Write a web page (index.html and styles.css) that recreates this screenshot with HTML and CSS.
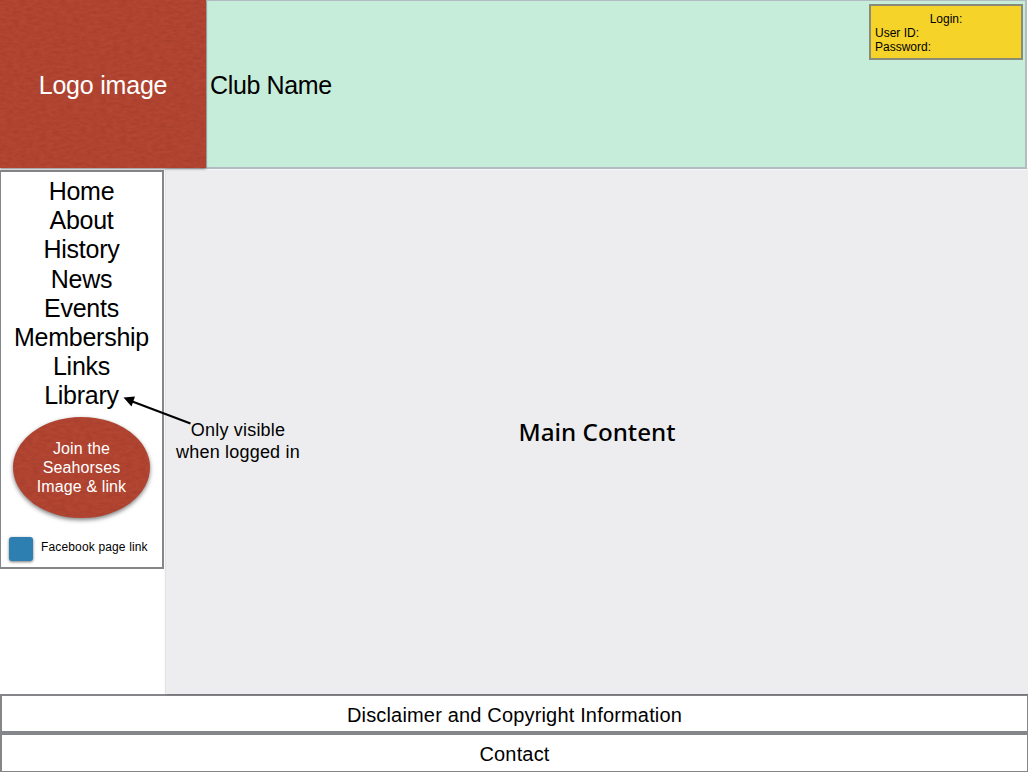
FILE: index.html
```html
<!DOCTYPE html>
<html lang="en">
<head>
<meta charset="utf-8">
<title>Club Name</title>
<link rel="stylesheet" href="styles.css">
</head>
<body>
<div class="page">
  <header class="header">
    <div class="logo">
      <svg class="grain" aria-hidden="true"><filter id="paper" x="0" y="0" width="100%" height="100%" color-interpolation-filters="sRGB"><feTurbulence type="fractalNoise" baseFrequency="0.15 0.35" numOctaves="3" seed="4"/><feColorMatrix values="0 0 0 0 0.5  0 0 0 0 0.13  0 0 0 0 0.1  0.4 0 0 0 -0.1"/></filter><rect width="100%" height="100%" filter="url(#paper)"/></svg>
      <span class="logo-text">Logo image</span>
    </div>
    <div class="banner">
      <h1 class="club">Club Name</h1>
      <div class="login">
        <div class="login-title">Login:</div>
        <div>User ID:</div>
        <div>Password:</div>
      </div>
    </div>
  </header>
  <div class="middle">
    <aside class="side">
      <nav class="nav">
        <a>Home</a>
        <a>About</a>
        <a>History</a>
        <a>News</a>
        <a>Events</a>
        <a>Membership</a>
        <a>Links</a>
        <a>Library</a>
      </nav>
      <div class="join">
        <svg class="grain" aria-hidden="true"><rect width="100%" height="100%" filter="url(#paper)"/></svg>
        <span class="join-text">Join the<br>Seahorses<br>Image &amp; link</span>
      </div>
      <div class="facebook"><span class="square"></span><span class="fb-text">Facebook page link</span></div>
    </aside>
    <main class="main"><h2 class="main-title">Main Content</h2></main>
    <svg class="arrow" width="70" height="32" viewBox="0 0 70 32" aria-hidden="true"><path d="M10 6L69.500 28.500" stroke="#000" stroke-width="2"/><path d="M2.500 2.500L14 1.500L10.500 11.500Z"/></svg>
    <p class="note">Only visible<br>when logged in</p>
  </div>
  <footer class="footer">
    <div class="foot-row">Disclaimer and Copyright Information</div>
    <div class="foot-row last">Contact</div>
  </footer>
</div>
</body>
</html>
```
FILE: styles.css
```css
* { box-sizing: border-box; }
body { margin: 0; background: #fff; color: #000; font-family: "Liberation Sans", Arial, sans-serif; }
h1, h2, p { margin: 0; font-weight: 400; }
.page { width: 1028px; height: 772px; overflow: hidden; display: flex; flex-direction: column; }
.header { position: relative; z-index: 1; height: 169px; display: flex; flex: none; }
.logo { position: relative; width: 206px; height: 168px; background: #b44733; color: #fff; display: flex; align-items: center; justify-content: center; box-shadow: 0 1px 2px rgba(0,0,0,.5); z-index: 1; }
.grain { position: absolute; inset: 0; width: 100%; height: 100%; }
.logo-text { position: relative; font-size: 25px; line-height: 29px; padding-top: 3px; letter-spacing: -.2px; }
.banner { width: 821px; border: solid #b3bcc0; border-width: 1px 2px 2px 1px; background: #c6edd9; display: flex; align-items: center; justify-content: space-between; padding: 3px 2px 0 3px; }
.club { font-size: 25px; line-height: 29px; letter-spacing: -.35px; }
.login { align-self: flex-start; width: 154px; height: 56px; border: 2px solid #898b78; background: #f5d328; font-size: 12px; line-height: 14px; padding: 6px 4px; }
.login-title { text-align: center; }
.middle { position: relative; height: 525px; display: flex; flex: none; }
.side { width: 164px; height: 399px; margin-top: 1px; border: solid #85868a; border-width: 2px 2px 2px 1px; flex: none; display: flex; flex-direction: column; align-items: center; padding-top: 5px; }
.nav { display: flex; flex-direction: column; align-items: center; font-size: 25px; line-height: 29.200px; letter-spacing: -.25px; }
.join { position: relative; width: 137px; height: 101px; margin-top: 6px; border-radius: 50%; background: #b44733; color: #fff; display: flex; align-items: center; justify-content: center; text-align: center; box-shadow: 0 2px 4px rgba(0,0,0,.5); flex: none; }
.join .grain { border-radius: 50%; }
.join-text { position: relative; font-size: 16px; line-height: 19px; padding-top: 1px; letter-spacing: .12px; }
.facebook { align-self: stretch; display: flex; align-items: center; margin-top: 19px; padding-left: 8px; gap: 8px; }
.square { width: 24px; height: 24px; border-radius: 3px; background: #2e7fb1; box-shadow: 0 1px 3px rgba(0,0,0,.55); }
.fb-text { font-size: 12px; line-height: 14px; padding-bottom: 4px; white-space: nowrap; letter-spacing: .15px; }
.main { margin-left: 2px; width: 862px; background: #ededef; border-top: 1px solid #f7f7f8; box-shadow: 0 0 2px rgba(0,0,0,.35); display: flex; align-items: center; justify-content: center; }
.main-title { font-family: "Noto Sans", sans-serif; font-weight: 500; font-size: 24.200px; line-height: 30px; }
.arrow { position: absolute; left: 121px; top: 226px; }
.note { position: absolute; left: 168px; top: 250px; width: 140px; text-align: center; font-size: 18px; line-height: 22px; letter-spacing: .2px; }
.footer { height: 78px; display: flex; flex-direction: column; flex: none; }
.foot-row { height: 39px; border: 2px solid #85868a; border-right-width: 1px; background: #fff; display: flex; align-items: center; justify-content: center; font-size: 20px; line-height: 24px; padding-top: 2px; letter-spacing: .17px; }
.last { border-bottom-width: 1px; }
```
